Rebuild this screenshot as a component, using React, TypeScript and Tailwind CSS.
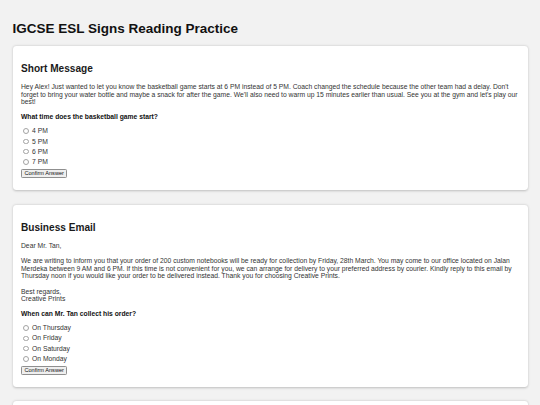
import React from "react";

type Q = {
  title: string;
  lines: string[];
  question: string;
  options: string[];
  name: string;
};

const items: Q[] = [
  {
    title: "Short Message",
    lines: [
      "Hey Alex! Just wanted to let you know the basketball game starts at 6 PM instead of 5 PM. Coach changed the schedule because the other team had a delay. Don't",
      "forget to bring your water bottle and maybe a snack for after the game. We'll also need to warm up 15 minutes earlier than usual. See you at the gym and let's play our",
      "best!",
    ],
    question: "What time does the basketball game start?",
    options: ["4 PM", "5 PM", "6 PM", "7 PM"],
    name: "q1",
  },
  {
    title: "Business Email",
    lines: [
      "Dear Mr. Tan,",
      "",
      "We are writing to inform you that your order of 200 custom notebooks will be ready for collection by Friday, 28th March. You may come to our office located on Jalan",
      "Merdeka between 9 AM and 6 PM. If this time is not convenient for you, we can arrange for delivery to your preferred address by courier. Kindly reply to this email by",
      "Thursday noon if you would like your order to be delivered instead. Thank you for choosing Creative Prints.",
      "",
      "Best regards,",
      "Creative Prints",
    ],
    question: "When can Mr. Tan collect his order?",
    options: ["On Thursday", "On Friday", "On Saturday", "On Monday"],
    name: "q2",
  },
];

function Card({ item }: { item: Q }) {
  return (
    <div className="bg-white rounded-[3.4px] shadow-[0_0.6px_2.4px_rgba(0,0,0,0.22)] px-[8.5px] pt-[8.5px] pb-[12.7px] mb-[14.3px]">
      <h2 className="mt-[8.5px] mb-[8.5px] text-[10.1px] leading-[11.6px] font-bold text-[#1a1a1a]">
        {item.title}
      </h2>
      <div className="text-[6.75px] leading-[7.7px] text-[#333333] mb-[6.75px]">
        {item.lines.map((l, i) => (
          <div key={i} className="whitespace-nowrap h-[7.7px]">
            {l}
          </div>
        ))}
      </div>
      <p className="text-[6.75px] leading-[7.7px] font-bold text-[#111111] mb-[5.2px]">
        {item.question}
      </p>
      <div className="flex flex-col">
        {item.options.map((o) => (
          <label
            key={o}
            className="flex items-center h-[10.4px] text-[6.75px] leading-[7.7px] text-[#333333]"
          >
            <input
              type="radio"
              name={item.name}
              className="appearance-none ml-[2.3px] mr-[3.4px] w-[5.4px] h-[5.4px] rounded-full border-[0.6px] border-[#a3a3a3] bg-white shrink-0"
            />
            {o}
          </label>
        ))}
      </div>
      <button className="mt-[1.2px] h-[9px] w-[46.4px] flex items-center justify-center text-[5.6px] leading-[6px] text-[#111111] bg-[#efefef] border-[0.6px] border-[#8f8f8f] rounded-[1.3px]">
        Confirm Answer
      </button>
    </div>
  );
}

export default function App() {
  return (
    <div className="min-h-[405px] bg-[#f2f2f2] px-[12.5px] pt-[20.6px] font-['Liberation_Sans',Arial,sans-serif]">
      <h1 className="text-[13.5px] leading-[15.5px] font-bold text-[#111111] mb-[9.9px]">
        IGCSE ESL Signs Reading Practice
      </h1>
      {items.map((it) => (
        <Card key={it.name} item={it} />
      ))}
      <div className="bg-white rounded-[3.4px] shadow-[0_0.6px_2.4px_rgba(0,0,0,0.22)] h-[140px]" />
    </div>
  );
}
